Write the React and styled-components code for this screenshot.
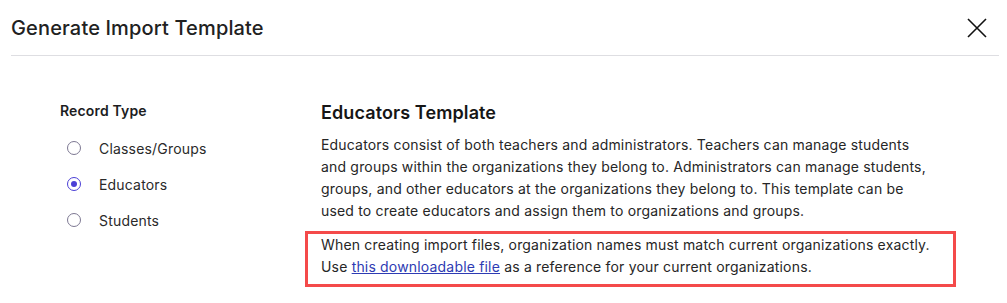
import React from 'react';
import styled, { createGlobalStyle } from 'styled-components';

const GlobalStyle = createGlobalStyle`
body{
    margin: 0;
    background: #fff;
    font-family: Inter, "Noto Sans", sans-serif;
    color: #222;
}
`;

const Modal = styled.div`
width: 1007px;
height: 303px;
padding: 0 8px 0 11px;
box-sizing: border-box;
overflow: hidden;
`;

const Header = styled.div`
display: flex;
align-items: flex-start;
justify-content: space-between;
height: 56px;
box-sizing: border-box;
padding-top: 14px;
border-bottom: 1px solid #dedee2;
`;

const Title = styled.h1`
margin: 0;
font-size: 20px;
line-height: 28px;
font-weight: 500;
letter-spacing: 0.15px;
color: #212121;
`;

const CloseButton = styled.button`
border: none;
background: none;
padding: 0;
margin: 4px 12px 0 0;
width: 20px;
height: 20px;
cursor: pointer;
svg{
    display: block;
}
`;

const Body = styled.div`
display: grid;
grid-template-columns: 261px 635px;
padding: 45px 0 0 49px;
`;

const Sidebar = styled.div`
display: flex;
flex-direction: column;
`;

const Label = styled.div`
font-size: 14px;
line-height: 20px;
font-weight: 600;
letter-spacing: 0.15px;
color: #1d1d1f;
margin: 0 0 9px;
`;

const Option = styled.label`
display: flex;
align-items: center;
gap: 18px;
height: 36px;
padding-left: 7px;
font-size: 14px;
letter-spacing: 0.18px;
color: #2a2a2a;
cursor: pointer;
`;

const Radio = styled.span`
width: 14px;
height: 14px;
box-sizing: border-box;
border-radius: 50%;
border: 1.5px solid ${p => (p.checked ? '#4b3fd6' : '#7d7892')};
display: flex;
align-items: center;
justify-content: center;
&::after{
    content: '';
    width: 6px;
    height: 6px;
    border-radius: 50%;
    background: #4b3fd6;
    display: ${p => (p.checked ? 'block' : 'none')};
}
`;

const Content = styled.div`
display: flex;
flex-direction: column;
`;

const Heading = styled.h2`
margin: 0;
font-size: 18px;
line-height: 24px;
font-weight: 600;
letter-spacing: 0.1px;
color: #161616;
`;

const Text = styled.p`
margin: 9px 0 0;
max-width: 614px;
font-size: 14px;
line-height: 22px;
letter-spacing: 0.18px;
color: #262626;
`;

const Notice = styled.div`
margin: 9px 0 0 -16px;
border: 3px solid #f44a4a;
padding: 0 13px 6px;
font-size: 14px;
line-height: 22px;
letter-spacing: 0.18px;
color: #262626;
a{
    color: #2e3bb3;
    text-decoration: underline;
}
`;

const options = [
    { label: 'Classes/Groups' },
    { label: 'Educators', checked: true },
    { label: 'Students' },
];

const App = () => {
    return (
        <Modal>
            <GlobalStyle />
            <Header>
                <Title>Generate Import Template</Title>
                <CloseButton aria-label="Close">
                    <svg width="20" height="20" viewBox="0 0 20 20">
                        <path d="M1 1 L19 19 M19 1 L1 19" stroke="#111" strokeWidth="1.6" fill="none" />
                    </svg>
                </CloseButton>
            </Header>
            <Body>
                <Sidebar>
                    <Label>Record Type</Label>
                    {options.map(o => (
                        <Option key={o.label}>
                            <Radio checked={o.checked} />
                            {o.label}
                        </Option>
                    ))}
                </Sidebar>
                <Content>
                    <Heading>Educators Template</Heading>
                    <Text>
                        Educators consist of both teachers and administrators. Teachers can manage students
                        and groups within the organizations they belong to. Administrators can manage students,
                        groups, and other educators at the organizations they belong to. This template can be
                        used to create educators and assign them to organizations and groups.
                    </Text>
                    <Notice>
                        When creating import files, organization names must match current organizations exactly.
                        <br />
                        Use <a href="#">this downloadable file</a> as a reference for your current organizations.
                    </Notice>
                </Content>
            </Body>
        </Modal>
    );
};

export default App;
